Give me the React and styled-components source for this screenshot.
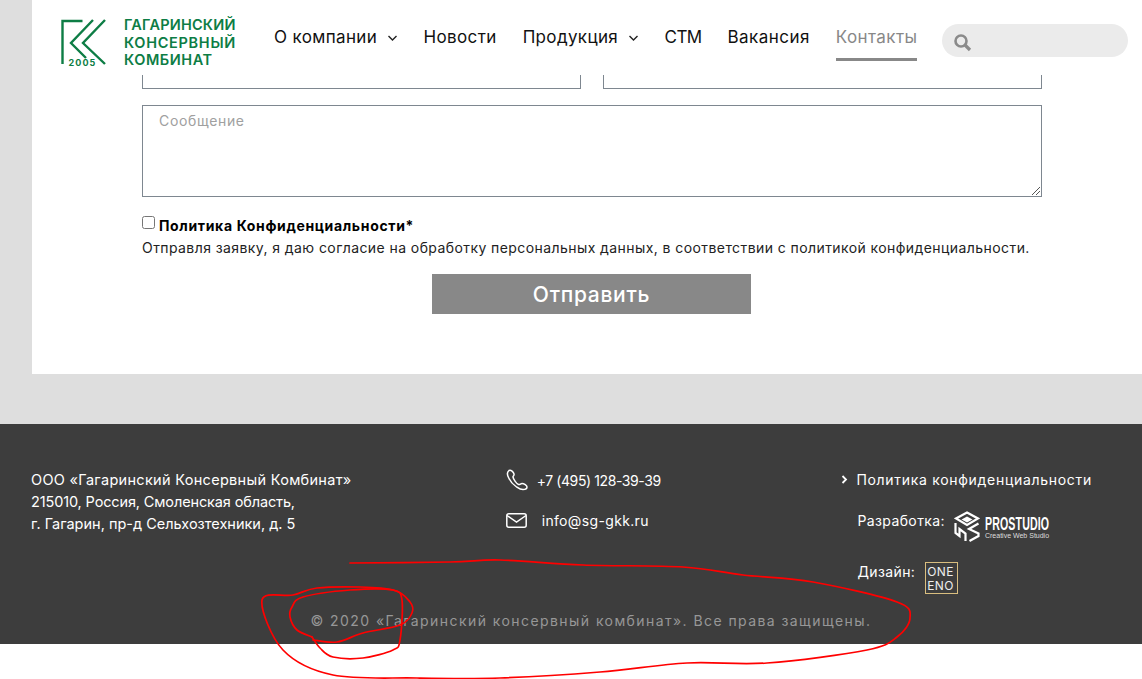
import React from 'react';
import styled, { createGlobalStyle } from 'styled-components';

const Global = createGlobalStyle`
  html, body { margin: 0; padding: 0; background: #fff; }
  body { font-family: "Inter", "Noto Sans", sans-serif; color: #000; overflow: hidden; }
  * { box-sizing: border-box; }
`;
const Page = styled.div`position: relative; width: 1142px; height: 679px; overflow: hidden; background: #fff;`;
const Main = styled.main`background: #dedede; padding: 0 0 50px 32px;`;
const Panel = styled.section`background: #fff; height: 374px; display: flex; flex-direction: column;`;
const Header = styled.header`height: 75px; display: flex; align-items: flex-start; padding-left: 28px;`;
const Logo = styled.div`display: flex; align-items: flex-start; gap: 18px; width: 214px; padding-top: 19px;`;
const LogoText = styled.div`font-size: 14.5px; line-height: 17.5px; font-weight: 600; color: #0d7d45; margin-top: -3px; white-space: nowrap;`;
const LogoLine = styled.div`letter-spacing: ${p => p.$spacing}px;`;
const Nav = styled.nav`display: flex; gap: 26px; height: 62px; margin-right: 25px;`;
const NavItem = styled.a`
  height: 61px; padding-top: 27px; font-size: 17px; line-height: 20px; white-space: nowrap;
  letter-spacing: ${p => p.$spacing ?? 0.35}px;
  display: flex; align-items: flex-start; gap: 9.5px;
  color: ${p => p.$active ? '#888' : '#111'};
  border-bottom: 3px solid ${p => p.$active ? '#888' : 'transparent'};
`;
const Search = styled.div`width: 186px; height: 33px; margin-top: 24px; border-radius: 17px; background: #ebebeb; display: flex; align-items: center; padding: 3px 0 0 11px;`;
const Form = styled.div`padding: 0 100px 0 110px; display: flex; flex-direction: column;`;
const InputRow = styled.div`display: grid; grid-template-columns: 439px 439px; gap: 22px; height: 14px;`;
const CutInput = styled.div`height: 14px; border: 1px solid #7e8790; border-top: 0;`;
const Message = styled.div`height: 92px; margin-top: 16px; border: 1px solid #7e8790; padding: 6px 16px; font-size: 14px; line-height: 18px; color: #a0a0a0; position: relative; letter-spacing: .65px;`;
const Grip = styled.svg`position: absolute; right: 0; bottom: 0; width: 10px; height: 10px;`;
const Consent = styled.div`display: flex; align-items: flex-start; gap: 4px; margin-top: 19px; height: 20px;`;
const Box = styled.span`width: 13px; height: 13px; border: 1px solid #767676; border-radius: 2.5px; background: #fff; display: block;`;
const ConsentLabel = styled.b`font-size: 14px; line-height: 18px; font-weight: 700; margin-top: 1px; letter-spacing: .65px;`;
const Note = styled.p`margin: 3px 0 0; font-size: 14px; line-height: 18px; color: #222; white-space: nowrap; letter-spacing: .42px;`;
const Submit = styled.button`align-self: flex-start; margin: 17px 0 0 290px; width: 319px; height: 40px; border: 0; background: #888; color: #fff; font: 500 21px/40px "Inter", sans-serif; letter-spacing: .7px; padding: 1px 0 0;`;
const Footer = styled.footer`height: 220px; background: #3d3d3d; color: #fff; display: flex; flex-direction: column; padding: 46px 50px 0 31px;`;
const Columns = styled.div`display: flex; height: 133px;`;
const Address = styled.div`width: 475px; margin-top: -1px; font-size: 14.5px; line-height: 22px; white-space: nowrap;`;
const AddressLine = styled.div`letter-spacing: ${p => p.$spacing}px;`;
const Contacts = styled.div`width: 336px; margin-top: -1px; display: flex; flex-direction: column; gap: 18px;`;
const Contact = styled.div`display: flex; align-items: center; height: 22px; font-size: 14px; gap: ${p => p.$gap}px; white-space: nowrap; letter-spacing: ${p => p.$spacing}px;`;
const Credits = styled.div`display: flex; flex-direction: column; font-size: 14px; letter-spacing: .7px; white-space: nowrap;`;
const Policy = styled.div`display: flex; align-items: center; gap: 8px; height: 20px; margin-top: -1px;`;
const Credit = styled.div`display: flex; align-items: flex-start; line-height: 20px; gap: ${p => p.$gap}px; margin: ${p => p.$top}px 0 0 16px; letter-spacing: .4px;`;
const StudioMark = styled.div`display: flex; flex-direction: column; margin: 5px 0 0 -4px;`;
const StudioName = styled.span`font: 700 18px/16px "Liberation Sans", sans-serif; transform-origin: left; transform: scaleX(.59); width: 64px; letter-spacing: .2px;`;
const StudioTag = styled.span`font: 7px/8px "Liberation Sans", sans-serif; color: #ddd; letter-spacing: 0;`;
const OneEno = styled.div`width: 33px; height: 32px; border: 1px solid #d9be7f; font-size: 12px; line-height: 14px; padding: 2px 0 0 1px; color: #eee; letter-spacing: .35px;`;
const Copyright = styled.div`text-align: center; font-size: 14px; line-height: 18px; color: #979797; letter-spacing: 1.43px; margin-top: 9px; padding-left: 59px; white-space: nowrap;`;
const Scribble = styled.svg`position: absolute; left: 0; top: 0; width: 1142px; height: 679px; pointer-events: none;`;

const smooth = pts => {
  let d = `M${pts[0][0]} ${pts[0][1]}`;
  for (let i = 0; i < pts.length - 1; i++) {
    const a = pts[Math.max(i - 1, 0)], b = pts[i], c = pts[i + 1], e = pts[Math.min(i + 2, pts.length - 1)];
    d += `C${b[0] + (c[0] - a[0]) / 6} ${b[1] + (c[1] - a[1]) / 6} ${c[0] - (e[0] - b[0]) / 6} ${c[1] - (e[1] - b[1]) / 6} ${c[0]} ${c[1]}`;
  }
  return d;
};
const outerLoop = [[350,563],[450,562],[500,560],[583,565],[683,567],[743,575],[813,582],[897,602],[910,618],[897,637],[867,650],[767,663],[687,663],[600,672],[500,678],[417,678],[333,675],[283,650],[262,600],[293,595],[317,588],[360,587],[393,590],[402,600],[400,640],[393,650],[363,658],[333,657],[320,648],[312,637]];
const innerLoop = [[312,637],[297,630],[290,617],[292,607],[303,597],[350,590],[393,590],[410,602],[412,613],[400,625],[363,633],[337,642],[313,640]];

const Caret = () => <svg width="11" height="20" viewBox="0 0 11 20" fill="none" stroke="#222" strokeWidth="1.4"><path d="M1.5 9l4 4 4-4" /></svg>;
const App = () => (
  <Page>
    <Global />
    <Main>
      <Panel>
        <Header>
          <Logo>
            <svg width="46" height="48" viewBox="0 0 46 48" fill="none" stroke="#0d7d45" strokeWidth="2.4">
              <path d="M2.500 45V2h20" />
              <path d="M33 1L11 24l15 15" />
              <path d="M45 1L23 24l22 21" />
              <text x="8.500" y="47" stroke="none" fill="#0d7d45" fontSize="9" fontWeight="700" letterSpacing="1.100" fontFamily="Inter, sans-serif">2005</text>
            </svg>
            <LogoText>
              <LogoLine $spacing={0.2}>ГАГАРИНСКИЙ</LogoLine>
              <LogoLine $spacing={0.7}>КОНСЕРВНЫЙ</LogoLine>
              <LogoLine $spacing={0.55}>КОМБИНАТ</LogoLine>
            </LogoText>
          </Logo>
          <Nav>
            <NavItem>О компании <Caret /></NavItem>
            <NavItem>Новости</NavItem>
            <NavItem>Продукция <Caret /></NavItem>
            <NavItem $spacing={-0.6}>СТМ</NavItem>
            <NavItem $spacing={0.45}>Вакансия</NavItem>
            <NavItem $active $spacing={0.4}>Контакты</NavItem>
          </Nav>
          <Search>
            <svg width="19" height="19" viewBox="0 0 19 19" fill="none" stroke="#8a8a8a"><circle cx="8" cy="8" r="5.500" strokeWidth="2.600" /><path d="M12 12l5 5" strokeWidth="3.200" /></svg>
          </Search>
        </Header>
        <Form>
          <InputRow><CutInput /><CutInput /></InputRow>
          <Message>
            Сообщение
            <Grip viewBox="0 0 10 10" stroke="#555" fill="none"><path d="M1 9l8-8M5 9l4-4" /></Grip>
          </Message>
          <Consent><Box /><ConsentLabel>Политика Конфиденциальности*</ConsentLabel></Consent>
          <Note>Отправля заявку, я даю согласие на обработку персональных данных, в соответствии с политикой конфиденциальности.</Note>
          <Submit>Отправить</Submit>
        </Form>
      </Panel>
    </Main>
    <Footer>
      <Columns>
        <Address>
          <AddressLine $spacing={0.3}>ООО «Гагаринский Консервный Комбинат»</AddressLine>
          <AddressLine $spacing={-0.13}>215010, Россия, Смоленская область,</AddressLine>
          <AddressLine $spacing={0}>г. Гагарин, пр-д Сельхозтехники, д. 5</AddressLine>
        </Address>
        <Contacts>
          <Contact $gap={9} $spacing={-0.4}>
            <svg width="22" height="22" viewBox="0 0 22 22" fill="none" stroke="#fff" strokeWidth="1.500"><path d="M3 1.500C1 3 1 6 3 9.500c1.500 3 4 6 7 8 2 1.300 4 3 7 3 2.500 0 4-1 4-2.500 0-1.500-3-3.500-5-3.500-1.500 0-2 1.500-3.500 1-2-.7-5-5-5.500-7.500C6.700 7 8.500 7 8 5 7.500 3 5 .5 3 1.500z" /></svg>
            +7 (495) 128-39-39
          </Contact>
          <Contact $gap={15} $spacing={0.35}>
            <svg width="21" height="15" viewBox="0 0 21 15" fill="none" stroke="#fff" strokeWidth="1.500"><rect x=".8" y=".8" width="19.400" height="13.400" rx="2" /><path d="M1 2.500l9.500 6.500L20 2.500" /></svg>
            info@sg-gkk.ru
          </Contact>
        </Contacts>
        <Credits>
          <Policy>
            <svg width="7" height="9" viewBox="0 0 7 9" fill="none" stroke="#fff" strokeWidth="1.800"><path d="M1.500 1L5 4.500 1.500 8" /></svg>
            Политика конфиденциальности
          </Policy>
          <Credit $gap={9} $top={22}>
            Разработка:
            <svg width="26" height="31" viewBox="0 0 26 31" fill="none" stroke="#fff" strokeWidth="2.200">
              <path d="M13 1.500L24 7.500 13 14 2 7.500z" />
              <path d="M13 5.500l5.500 3-5.500 3-5.500-3z" fill="#fff" stroke="none" />
              <path d="M1.500 12v10l4 3v-7l6 4.500V30" />
              <path d="M24.500 12.500l-9.500 5.500 9.500 4.500v2.500l-9 5" />
            </svg>
            <StudioMark><StudioName>PROSTUDIO</StudioName><StudioTag>Creative Web Studio</StudioTag></StudioMark>
          </Credit>
          <Credit $gap={10} $top={20}>
            Дизайн:
            <OneEno>ONE<br />ENO</OneEno>
          </Credit>
        </Credits>
      </Columns>
      <Copyright>© 2020 «Гагаринский консервный комбинат». Все права защищены.</Copyright>
    </Footer>
    <Scribble viewBox="0 0 1142 679" fill="none" stroke="#f00" strokeWidth="1.700" strokeLinecap="round" strokeLinejoin="round">
      <path d={smooth(outerLoop)} />
      <path d={smooth(innerLoop)} />
    </Scribble>
  </Page>
);
export default App;
